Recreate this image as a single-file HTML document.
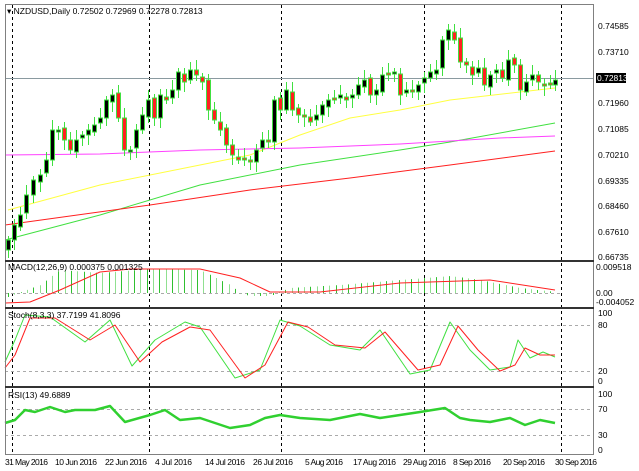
<!DOCTYPE html>
<html><head><meta charset="utf-8"><style>
html,body{margin:0;padding:0;background:#fff;}
body{width:639px;height:471px;overflow:hidden;position:relative;font-family:"Liberation Sans",sans-serif;}
svg{position:absolute;left:0;top:0;}
text{font-family:"Liberation Sans",sans-serif;font-size:8.5px;fill:#000;}
</style></head><body>
<svg id="s" width="639" height="471" xmlns="http://www.w3.org/2000/svg">
<rect x="0" y="0" width="639" height="471" fill="#fff"/>
<g id="g"></g>
<rect x="5.5" y="4.5" width="588" height="450" fill="none" stroke="#808080"/>
<line x1="5" y1="261" x2="594" y2="261" stroke="#333" stroke-width="2"/>
<line x1="5" y1="308" x2="594" y2="308" stroke="#333" stroke-width="2"/>
<line x1="5" y1="387" x2="594" y2="387" stroke="#333" stroke-width="2"/>
<text x="7" y="14">▾ NZDUSD,Daily  0.72502 0.72969 0.72278 0.72813</text>
<text x="8" y="270">MACD(12,26,9) 0.000375 0.001325</text>
<text x="8" y="318">Stoch(8,3,3) 37.7199 41.8096</text>
<text x="8" y="398">RSI(13) 49.6889</text>
<g>
<text x="598" y="29">0.74585</text>
<text x="598" y="55">0.73710</text>
<rect x="596" y="73" width="30" height="10" fill="#000"/>
<text x="597" y="81" style="fill:#fff">0.72813</text>
<text x="598" y="106">0.71960</text>
<text x="598" y="132">0.71085</text>
<text x="598" y="158">0.70210</text>
<text x="598" y="184">0.69335</text>
<text x="598" y="209">0.68460</text>
<text x="598" y="235">0.67610</text>
<text x="598" y="260">0.66735</text>
<text x="596" y="270">0.009518</text>
<text x="596" y="296">0.00</text>
<text x="596" y="305">-0.004052</text>
<text x="598" y="316">100</text>
<text x="598" y="328">80</text>
<text x="598" y="374">20</text>
<text x="598" y="384">0</text>
<text x="598" y="397">100</text>
<text x="598" y="412">70</text>
<text x="598" y="438">30</text>
<text x="598" y="453">0</text>
</g>
<g>
<text x="5" y="465" textLength="43">31 May 2016</text>
<text x="55" y="465" textLength="42">10 Jun 2016</text>
<text x="105" y="465" textLength="42">22 Jun 2016</text>
<text x="155" y="465" textLength="37">4 Jul 2016</text>
<text x="205" y="465" textLength="40">14 Jul 2016</text>
<text x="253" y="465" textLength="40">26 Jul 2016</text>
<text x="305" y="465" textLength="38">5 Aug 2016</text>
<text x="353" y="465" textLength="43">17 Aug 2016</text>
<text x="403" y="465" textLength="43">29 Aug 2016</text>
<text x="453" y="465" textLength="38">8 Sep 2016</text>
<text x="503" y="465" textLength="42">20 Sep 2016</text>
<text x="555" y="465" textLength="42">30 Sep 2016</text>
</g>
</svg>
<script>
(function(){
var g=document.getElementById('g'),h='';
function ln(x1,y1,x2,y2,col,w,d){h+='<line x1="'+x1+'" y1="'+y1+'" x2="'+x2+'" y2="'+y2+'" stroke="'+col+'" stroke-width="'+(w||1)+'"'+(d?' stroke-dasharray="'+d+'"':'')+'/>';}
function pl(p,col,w){h+='<polyline fill="none" stroke-linejoin="round" stroke="'+col+'" stroke-width="'+(w||1)+'" points="'+p.map(function(a){return a.join(',')}).join(' ')+'"/>';}
function interp(p,x){for(var i=0;i<p.length-1;i++){if(x>=p[i][0]&&x<=p[i+1][0]){var t=(x-p[i][0])/(p[i+1][0]-p[i][0]);return p[i][1]+t*(p[i+1][1]-p[i][1]);}}return p[p.length-1][1];}
[12,149,281,424,561].forEach(function(x){ln(x+.5,5,x+.5,454,'#000',1,'3,3');});
ln(5,78.5,594,78.5,'#8a9aa0',1);
ln(5,293.5,560,293.5,'#aaa',1,'3,3');
ln(5,325.5,594,325.5,'#aaa',1,'3,3');ln(5,371.5,594,371.5,'#aaa',1,'3,3');
ln(5,409.5,594,409.5,'#aaa',1,'3,3');ln(5,435.5,594,435.5,'#aaa',1,'3,3');
pl([[8,210],[100,185],[200,165],[250,155],[300,135],[350,118],[400,110],[450,100],[555,88]],'#ffff40',1);
pl([[5,240],[100,215],[200,185],[300,165],[400,150],[450,142],[555,123]],'#40e040',1);
pl([[5,155],[100,154],[200,150],[300,148],[400,144],[500,138],[555,136]],'#ff40ff',1);
pl([[5,225],[150,205],[250,190],[350,178],[450,165],[555,151]],'#ff2020',1);
var cs=[[8,240],[14,225],[20,215],[26,195],[33,180],[40,175],[46,160],[52,130],[58,130],[64,140],[70,150],[76,140],[82,135],[88,130],[94,125],[100,118],[106,100],[112,95],[118,118],[124,150],[130,150],[136,130],[142,115],[148,100],[154,118],[160,95],[166,100],[172,90],[178,72],[184,82],[190,70],[196,75],[202,82],[208,110],[214,120],[220,130],[226,145],[232,155],[238,160],[244,160],[250,160],[256,150],[262,140],[268,140],[274,100],[280,110],[286,90],[292,110],[298,115],[304,115],[310,122],[316,115],[322,105],[328,100],[334,98],[340,95],[346,100],[352,95],[358,85],[364,80],[370,95],[376,90],[382,75],[388,73],[394,72],[400,95],[406,90],[412,90],[418,85],[424,78],[430,72],[436,70],[442,40],[448,30],[454,40],[460,62],[466,65],[472,75],[478,68],[484,85],[490,75],[496,70],[502,78],[508,60],[514,65],[520,90],[526,82],[532,75],[538,82],[544,85],[550,85],[555,80]];
for(var i=0;i<cs.length;i++){var x=cs[i][0],cl=cs[i][1],op=i?cs[i-1][1]+((i%3)-1)*2:250;
 var tp=Math.min(op,cl),bt=Math.max(op,cl);if(bt-tp<2)bt=tp+2;
 ln(x+.5,tp-4-(i%4)*2,x+.5,bt+4+((i+2)%4)*2,'#40e040',1);
 h+='<rect x="'+(x-1.5)+'" y="'+tp+'" width="4" height="'+(bt-tp)+'" fill="'+(cl<op?'#000':'#ff2020')+'" stroke="#40e040" stroke-width="1"/>';}
var hk=[[8,297],[40,285],[60,270],[100,273],[150,269],[200,270],[230,285],[240,293],[250,296],[270,296],[290,288],[340,285],[400,280],[450,276],[480,280],[520,288],[555,292]];
for(var xx=8;xx<=555;xx+=6.3){var t=interp(hk,xx),rx=Math.round(xx);ln(rx+.5,293,rx+.5,t,(Math.round(xx/6.3)%2)?'#30c030':'#90e090',1);}
pl([[5,303],[30,302],[60,290],[100,272],[130,269],[200,269],[240,278],[270,292],[320,292],[400,283],[490,280],[555,290]],'#ff2020',1);
pl([[5,362],[15,340],[25,315],[50,317],[85,342],[110,320],[132,366],[155,340],[185,322],[200,327],[235,378],[260,370],[280,320],[300,326],[330,345],[360,350],[380,330],[410,374],[430,370],[450,322],[470,350],[490,370],[510,367],[518,340],[530,358],[543,352],[555,357]],'#40e040',1);
pl([[5,368],[15,355],[30,318],[55,318],[90,340],[115,325],[140,362],[162,342],[190,327],[210,330],[245,378],[265,365],[288,322],[308,327],[335,345],[365,348],[385,332],[418,370],[440,365],[458,326],[478,350],[500,371],[515,365],[525,348],[540,355],[555,355]],'#ff2020',1);
pl([[5,423],[15,420],[25,410],[35,412],[50,407],[65,412],[75,410],[95,410],[110,406],[125,422],[150,415],[165,410],[180,420],[200,418],[230,428],[250,425],[265,418],[280,415],[300,418],[330,420],[360,414],[380,418],[400,415],[420,412],[445,408],[460,418],[470,420],[490,422],[510,418],[525,425],[540,420],[555,423]],'#30d030',2.5);
g.innerHTML=h;
})();
</script>
</body></html>
